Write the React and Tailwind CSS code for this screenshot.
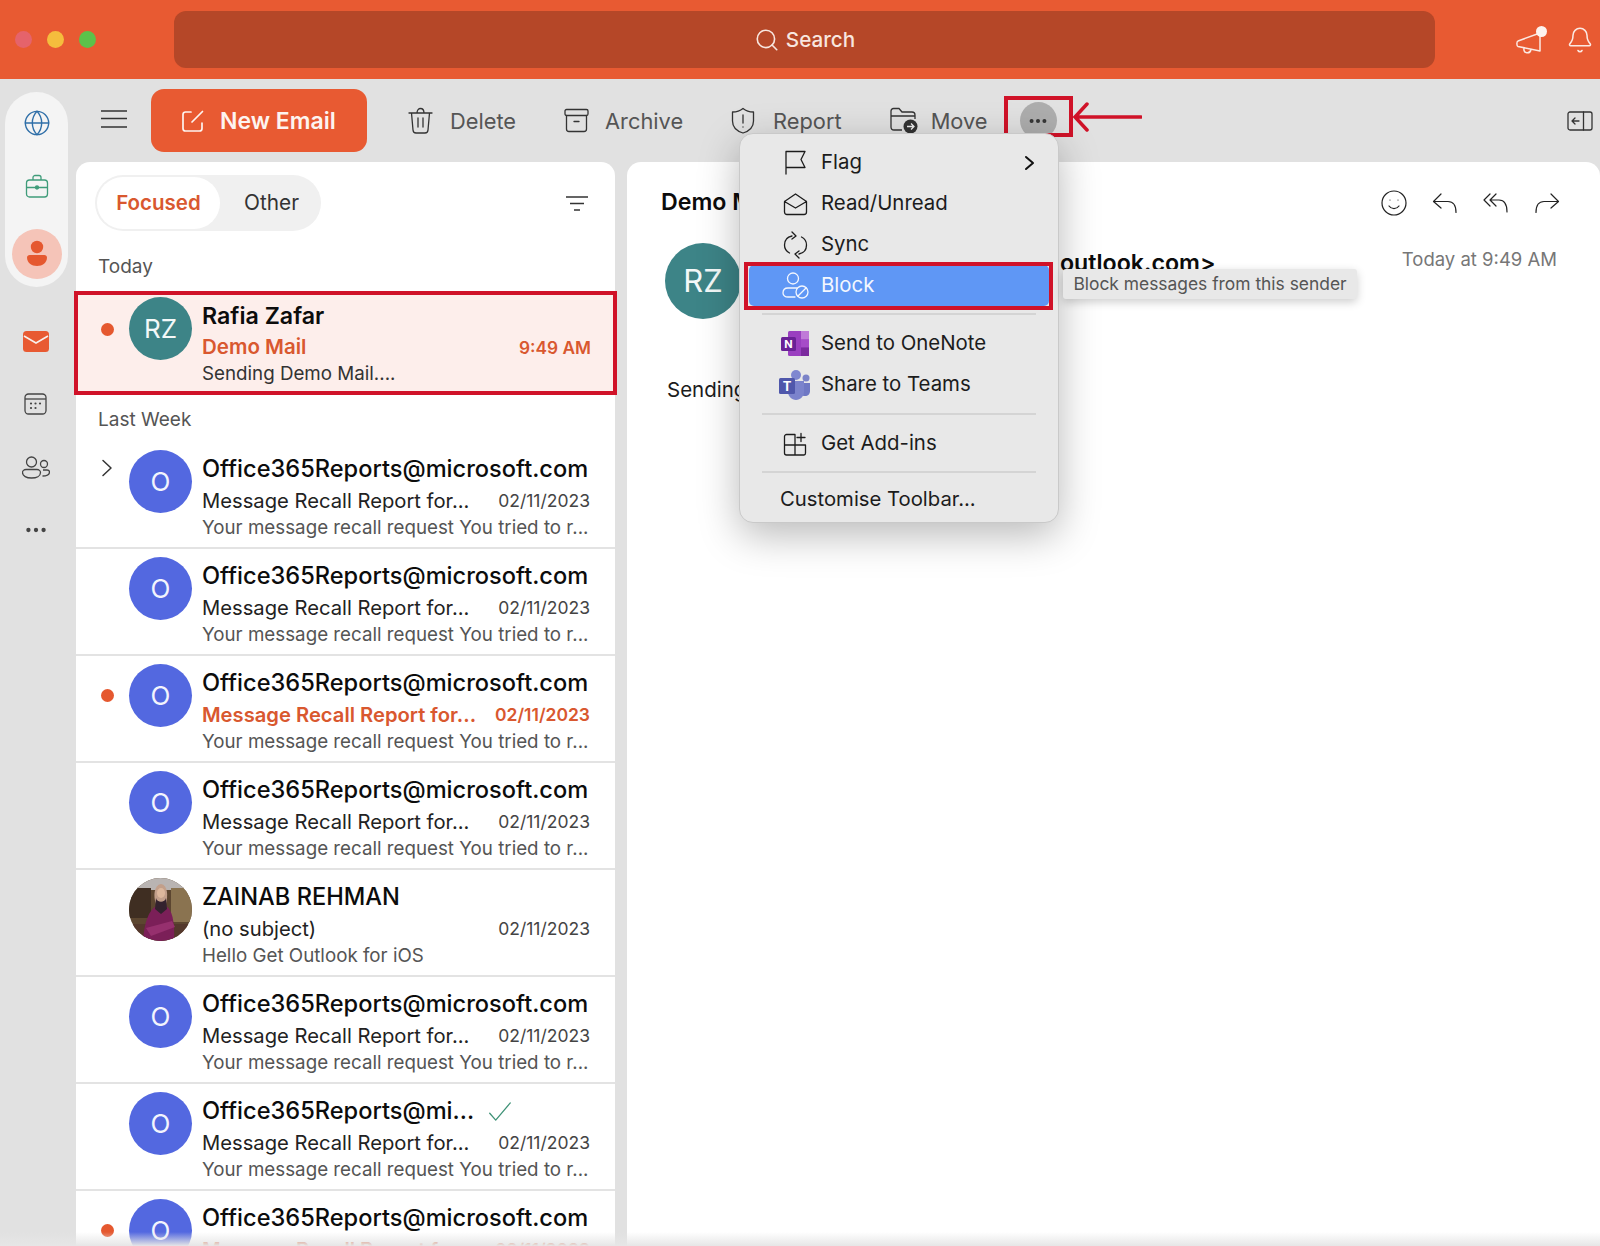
import { Search, Bell, Globe, Ellipsis } from "lucide-react";

const rows = [
  { subject: "Message Recall Report for...", chevron: true },
  { subject: "Message Recall Report for..." },
  { subject: "Message Recall Report for...", unread: true },
  { subject: "Message Recall Report for..." },
  { name: "ZAINAB REHMAN", subject: "(no subject)", preview: "Hello Get Outlook for iOS", photo: true },
  { subject: "Message Recall Report for..." },
  { name: "Office365Reports@mi...", subject: "Message Recall Report for...", check: true },
  { subject: "Message Recall Report for...", unread: true },
];

const Line = ({ className = "", ...p }) => (
  <svg fill="none" stroke="currentColor" strokeWidth="1.5" strokeLinecap="round" strokeLinejoin="round" className={className} {...p} />
);

const PersonRail = () => (
  <svg width="24" height="28" viewBox="0 0 24 28" fill="#e5582f">
    <circle cx="12" cy="7" r="6.2" />
    <path d="M2 17.5c0-1.6 1.2-2.5 2.7-2.5h14.6c1.5 0 2.7.9 2.7 2.5 0 5-4.5 8.5-10 8.5S2 22.500 2 17.500z" />
  </svg>
);

const ZainabPhoto = () => (
  <svg width="63" height="63" viewBox="0 0 63 63" className="shrink-0 rounded-full">
    <rect width="63" height="63" fill="#5c4630" />
    <rect width="63" height="12" fill="#b9b4b2" />
    <rect y="10" width="22" height="30" fill="#3f2e22" />
    <rect x="42" y="10" width="21" height="34" fill="#8a7350" />
    <rect y="46" width="63" height="17" fill="#54382c" />
    <path d="M14 63c1-18 6-31 13-35h10c6 4 9 15 8 35z" fill="#7b1f58" />
    <path d="M27 26c-3-8-2-19 5-20 7 1 7 12 5 20l-5 6z" fill="#c29f8a" />
    <path d="M27 20c1 5 9 5 10 0l1 11-6 5-6-5z" fill="#33222e" />
    <ellipse cx="32" cy="15" rx="4" ry="5" fill="#dcb79c" />
    <path d="M17 50l26-7 3 6-24 9z" fill="#96306e" />
  </svg>
);

const Toolbtn = ({ icon, label }) => (
  <div className="flex items-center text-[#555555]">
    {icon}
    <span className="mt-[2px] text-[21.800px]">{label}</span>
  </div>
);

const MenuItem = ({ icon, label, active, children }) => (
  <div className={`mx-[9px] flex h-[41px] items-center rounded-[5px] ${active ? "bg-[#5f97f5] text-[#f4f7fe]" : "text-[#1c1c1c]"}`}>
    <div className="flex w-[72px] justify-center pl-[20px]">{icon}</div>
    <span className="text-[20.400px]">{label}</span>
    {children}
  </div>
);

const Row = ({ row }) => (
  <div className="flex h-[107px] border-b-2 border-[#e3e3e3] pt-[8px]">
    <div className="flex w-[53px] shrink-0 justify-center pl-[9px] pt-[9px]">
      {row.chevron && (
        <Line width="12" height="18" viewBox="0 0 12 18" className="text-[#333333]"><path d="M2 1.500l8 7.500-8 7.500" /></Line>
      )}
      {row.unread && <div className="mt-[16px] h-[13px] w-[13px] rounded-full bg-[#e5582f]" />}
    </div>
    {row.photo ? (
      <ZainabPhoto />
    ) : (
      <div className="flex h-[63px] w-[63px] shrink-0 items-center justify-center rounded-full bg-[#5368e0] text-[26px] text-[#f2f4fd]">O</div>
    )}
    <div className="ml-[10px] min-w-0 flex-1 pr-[25px] pt-[3px]">
      <div className="flex h-[32px] items-center text-[23.600px] font-medium leading-[32px] text-[#0c0c0c]">
        <span className="whitespace-nowrap">{row.name || "Office365Reports@microsoft.com"}</span>
        {row.check && (
          <Line width="24" height="21" viewBox="0 0 28 24" strokeWidth="1.500" className="ml-[14px] text-[#3f9277]"><path d="M2 14l7 8L26 2" /></Line>
        )}
      </div>
      <div className={`flex h-[31px] items-center justify-between leading-[31px] ${row.unread ? "font-semibold text-[#d9582f]" : "text-[#222222]"}`}>
        <span className="whitespace-nowrap text-[20.200px]">{row.subject}</span>
        <span className={`text-[17.500px] ${row.unread ? "" : "text-[#444444]"}`}>02/11/2023</span>
      </div>
      <div className="mt-[1px] h-[22px] truncate text-[18.750px] leading-[22px] text-[#555555]">
        {row.preview || "Your message recall request You tried to r..."}
      </div>
    </div>
  </div>
);

export default function App() {
  return (
    <div className="relative flex h-[1246px] w-[1600px] flex-col overflow-hidden bg-[#e1e1e1] [font-family:Inter,sans-serif]">
      {/* title bar */}
      <div className="flex h-[79px] shrink-0 items-center bg-[#e85a32]">
        <div className="flex w-[174px] shrink-0 items-center gap-[15px] pl-[15px]">
          <div className="h-[17px] w-[17px] rounded-full bg-[#e5636b]" />
          <div className="h-[17px] w-[17px] rounded-full bg-[#f5bd3d]" />
          <div className="h-[17px] w-[17px] rounded-full bg-[#5cc24a]" />
        </div>
        <div className="flex h-[57px] w-[1261px] items-center justify-center gap-[6px] rounded-[12px] bg-[#b54728] text-[#f8e6df]">
          <Search size={26} strokeWidth={1.500} />
          <span className="text-[20.700px] font-medium">Search</span>
        </div>
        <div className="ml-auto flex items-center gap-[20px] pr-[6px] text-[#fbe9e3]">
          <div className="relative h-[32px] w-[30px]">
            <Line width="28" height="28" viewBox="0 0 28 28" strokeWidth="1.500" className="absolute left-0 top-[4px]">
              <path d="M2 13l22-8v18L2 18.500c-1.500-.5-1.500-5 0-5.500z" />
              <path d="M8 20.500c-1 5 6 6 7 1" />
            </Line>
            <div className="absolute right-[-1px] top-[2px] h-[11px] w-[11px] rounded-full bg-[#fdf3ef]" />
          </div>
          <Bell size={28} strokeWidth={1.300} />
        </div>
      </div>

      <div className="flex min-h-0 flex-1">
        {/* left rail */}
        <div className="flex w-[76px] shrink-0 flex-col items-center">
          <div className="ml-[-3px] mt-[13px] flex h-[195px] w-[63px] flex-col items-center rounded-full bg-[#f4f4f4]">
            <Globe size={28} strokeWidth={1.200} className="mt-[17px] text-[#2f6fa8]" />
            <svg width="24" height="25" viewBox="0 0 24 25" fill="none" stroke="#3f9c7a" strokeWidth="1.300" strokeLinejoin="round" className="mt-[37px]">
              <rect x="1.500" y="6" width="21" height="17" rx="3" />
              <path d="M8 6V3.500C8 2.500 9 1.500 10 1.500h4c1 0 2 1 2 2V6M1.500 13.500h21" />
              <circle cx="12" cy="13.500" r="1.500" fill="#3f9c7a" />
            </svg>
            <div className="mt-[30px] flex h-[50px] w-[50px] items-center justify-center rounded-full bg-[#f5c4b8]">
              <PersonRail />
            </div>
          </div>
          <svg width="26" height="21" viewBox="0 0 26 21" className="ml-[-5px] mt-[44px]">
            <rect width="26" height="21" rx="3.500" fill="#e85a32" />
            <path d="M1 5l12 7 12-7" fill="none" stroke="#f8f0ec" strokeWidth="1.600" />
          </svg>
          <svg width="23" height="22" viewBox="0 0 23 22" fill="none" stroke="#444444" strokeWidth="1.300" className="ml-[-5px] mt-[41px]">
            <rect x="1" y="1" width="21" height="20" rx="3.500" />
            <path d="M1 6h21" />
            <path d="M7 10.500h.01M11.500 10.500h.01M16 10.500h.01M7 15h.01M11.500 15h.01" strokeWidth="2.200" strokeLinecap="round" />
          </svg>
          <svg width="28" height="23" viewBox="0 0 28 23" fill="none" stroke="#444444" strokeWidth="1.300" className="ml-[-5px] mt-[41px]">
            <circle cx="9.500" cy="6" r="5" />
            <path d="M4 13.500h11c2 0 3.500 1.500 3.500 3 0 3.500-4 5.500-9 5.500s-9-2-9-5.500c0-1.500 1.500-3 3.500-3z" />
            <circle cx="22" cy="8" r="3.500" />
            <path d="M21 14h4c1.500 0 2.500 1 2.500 2 0 2.500-3 4-7 4" />
          </svg>
          <Ellipsis size={26} strokeWidth={2} className="ml-[-5px] mt-[38px] text-[#444444]" />
        </div>

        <div className="flex min-w-0 flex-1 flex-col">
          {/* toolbar */}
          <div className="flex h-[83px] shrink-0 items-center">
            <svg width="26" height="18" viewBox="0 0 26 18" fill="none" stroke="#333333" strokeWidth="1.300" className="ml-[25px] mb-[3px]">
              <path d="M0 1h26M0 8.500h26M0 17h26" />
            </svg>
            <div className="ml-[24px] flex h-[63px] w-[216px] items-center rounded-[13px] bg-[#e85a32] pl-[30px] text-[#fdf4f0]">
              <Line width="24" height="24" viewBox="0 0 24 24" strokeWidth="1.700" className="mr-[15px]">
                <path d="M10 3H4.500C3 3 2 4 2 5.500v14C2 21 3 22 4.500 22h14c1.500 0 2.500-1 2.500-2.500V14" />
                <path d="M21.500 2.500L11 13" />
              </Line>
              <span className="mt-[2px] text-[23px] font-semibold">New Email</span>
            </div>
            <div className="ml-[41px] flex items-center gap-[48px]">
              <Toolbtn
                label="Delete"
                icon={
                  <Line width="25" height="27" viewBox="0 0 25 27" strokeWidth="1.300" className="mr-[17px] text-[#333333]">
                    <path d="M1 6h23M3.500 6l1.500 17c.1 1.800 1.300 3 3 3h9c1.700 0 2.900-1.200 3-3l1.500-17M9 6c0-6 7-6 7 0M10 11v9M15 11v9" />
                  </Line>
                }
              />
              <Toolbtn
                label="Archive"
                icon={
                  <Line width="25" height="25" viewBox="0 0 25 25" strokeWidth="1.300" className="mr-[16px] text-[#333333]">
                    <rect x="1" y="1.500" width="23" height="6" rx="1.500" />
                    <path d="M2.500 7.500V21c0 1.500 1 2.500 2.500 2.500h15c1.500 0 2.500-1 2.500-2.500V7.500M10 13.500h5" />
                  </Line>
                }
              />
              <Toolbtn
                label="Report"
                icon={
                  <Line width="24" height="27" viewBox="0 0 24 27" strokeWidth="1.300" className="mr-[18px] text-[#333333]">
                    <path d="M12 1.500c3 2.500 6.500 3.500 10.500 3.500v9c0 6-4 10-10.500 12C5.500 24 1.500 20 1.500 14V5C5.500 5 9 4 12 1.500zM12 8v8M12 20h.01" />
                  </Line>
                }
              />
              <Toolbtn
                label="Move"
                icon={
                  <svg width="28" height="27" viewBox="0 0 28 27" className="mr-[13px] text-[#333333]">
                    <path d="M12 23H4c-2 0-3-1-3-3V4c0-1.500 1-2.500 2.500-2.500H9l3 3.500h10c2 0 3 1 3 3v4M1 9h24" fill="none" stroke="currentColor" strokeWidth="1.300" />
                    <circle cx="20.500" cy="19.500" r="7" fill="#333333" />
                    <path d="M17 19.500h7M21 16.500l3 3-3 3" fill="none" stroke="#f0f0f0" strokeWidth="1.300" />
                  </svg>
                }
              />
            </div>
            <div className="ml-[32px] flex h-[37px] w-[37px] items-center justify-center rounded-full bg-[#adadad]">
              <Ellipsis size={22} strokeWidth={2.400} className="text-[#333333]" />
            </div>
            <svg width="26" height="20" viewBox="0 0 26 20" fill="none" stroke="#333333" strokeWidth="1.300" strokeLinecap="round" strokeLinejoin="round" className="ml-auto mr-[7px]">
              <rect x="1" y="1" width="24" height="18" rx="2" />
              <path d="M16.500 1v18M12 10H5M8 7l-3 3 3 3" />
            </svg>
          </div>

          {/* panes */}
          <div className="flex min-h-0 flex-1 gap-[12px]">
            <div className="w-[539px] shrink-0 rounded-t-[14px] bg-white">
              <div className="flex items-center justify-between pl-[19px] pr-[27px] pt-[13px]">
                <div className="flex h-[56px] w-[226px] items-center rounded-full bg-[#f0f0f0] pl-[2px]">
                  <div className="flex h-[52px] w-[123px] items-center justify-center rounded-full bg-white text-[20.500px] font-semibold text-[#d9582f]">Focused</div>
                  <div className="ml-[24px] text-[20.800px] text-[#333333]">Other</div>
                </div>
                <svg width="22" height="15" viewBox="0 0 22 15" fill="none" stroke="#333333" strokeWidth="1.300">
                  <path d="M0 1h22M4 7.500h14M8 14h6" />
                </svg>
              </div>
              <div className="ml-[22px] mt-[23px] text-[19px] leading-[26px] text-[#555555]">Today</div>

              {/* selected mail */}
              <div className="relative mx-[-2px] mt-[11px] flex h-[104px] border-[4px] border-[#d01228] bg-[#fdeeeb] pt-[2px]">
                <div className="flex w-[51px] shrink-0 justify-center pl-[7px] pt-[26px]">
                  <div className="h-[13px] w-[13px] rounded-full bg-[#e5582f]" />
                </div>
                <div className="flex h-[63px] w-[63px] shrink-0 items-center justify-center rounded-full bg-[#3d8487] text-[26px] text-[#f3f8f8]">RZ</div>
                <div className="ml-[10px] min-w-0 flex-1 pr-[22px] pt-[3px]">
                  <div className="h-[32px] text-[23.200px] font-semibold leading-[32px] text-[#0c0c0c]">Rafia Zafar</div>
                  <div className="flex h-[31px] items-center justify-between font-semibold text-[#d9582f]">
                    <span className="text-[20.500px]">Demo Mail</span>
                    <span className="text-[17.300px]">9:49 AM</span>
                  </div>
                  <div className="h-[22px] text-[18.750px] leading-[22px] text-[#333333]">Sending Demo Mail....</div>
                </div>
              </div>

              <div className="ml-[22px] mb-[9px] mt-[12px] text-[19px] leading-[26px] text-[#555555]">Last Week</div>
              {rows.map((row, i) => (
                <Row key={i} row={row} />
              ))}
            </div>

            {/* reading pane */}
            <div className="min-w-0 flex-1 rounded-t-[14px] bg-white">
              <div className="flex h-[81px] items-center justify-between pl-[34px] pr-[40px]">
                <span className="text-[23.200px] font-semibold text-[#0c0c0c]">Demo Mail</span>
                <div className="flex items-center gap-[25px] text-[#222222]">
                  <Line width="26" height="26" viewBox="0 0 26 26" strokeWidth="1.200">
                    <circle cx="13" cy="13" r="12" />
                    <path d="M8 16c2.500 3.500 7.500 3.500 10 0M9 10h.01M17 10h.01" />
                  </Line>
                  <Line width="26" height="22" viewBox="0 0 26 22" strokeWidth="1.200">
                    <path d="M9 2L1.500 9.500 9 16M1.500 9.500H16c5 0 8 3.500 8 11" />
                  </Line>
                  <Line width="26" height="22" viewBox="0 0 26 22" strokeWidth="1.200">
                    <path d="M7 2L1 8l6 6M13 2L7 8l6 6M7 8h9c5 0 8 4 8 12" />
                  </Line>
                  <Line width="26" height="22" viewBox="0 0 26 22" strokeWidth="1.200">
                    <path d="M17 2l7.500 7.500L17 16M24.500 9.500H10c-5 0-8 3.500-8 11" />
                  </Line>
                </div>
              </div>
              <div className="flex pl-[38px] pr-[43px]">
                <div className="flex h-[76px] w-[76px] shrink-0 items-center justify-center rounded-full bg-[#3d8487] text-[31px] text-[#f3f8f8]">RZ</div>
                <div className="ml-[319px] mt-[5px] text-[23.200px] font-semibold leading-[30px] text-[#0c0c0c]">outlook.com&gt;</div>
                <div className="ml-auto mt-[3px] text-[18.500px] text-[#777777]">Today at 9:49 AM</div>
              </div>
              <div className="ml-[40px] mt-[56px] text-[20.500px] leading-[30px] text-[#1c1c1c]">Sending Demo Mail....</div>
            </div>
          </div>
        </div>
      </div>

      {/* annotation over the toolbar */}
      <div className="absolute left-[1004px] top-[96px] h-[41px] w-[69px] border-[4px] border-[#d01228]" />
      <svg width="70" height="32" viewBox="0 0 70 32" fill="none" stroke="#d01228" strokeWidth="3.500" strokeLinecap="round" className="absolute left-[1072px] top-[101px]">
        <path d="M3 16h66M15 3L3 16l12 13" />
      </svg>

      {/* more menu */}
      <div className="absolute left-[739px] top-[133px] h-[390px] w-[320px] rounded-[14px] border border-[#c9c9c9] bg-[#e8e8e8] pt-[8px] shadow-[0_12px_40px_rgba(0,0,0,0.28)]">
        <MenuItem
          label="Flag"
          icon={
            <Line width="23" height="25" viewBox="0 0 23 25" strokeWidth="1.300">
              <path d="M2 24V1.500h19l-4 8 4 8H2" />
            </Line>
          }
        >
          <Line width="11" height="16" viewBox="0 0 11 16" strokeWidth="2" className="ml-auto mr-[14px] text-[#111111]">
            <path d="M2 2l7 6-7 6" />
          </Line>
        </MenuItem>
        <MenuItem
          label="Read/Unread"
          icon={
            <Line width="25" height="24" viewBox="0 0 25 24" strokeWidth="1.300">
              <path d="M1.500 9.500L12.500 2l11 7.500V20c0 1.500-1 2.500-2.500 2.500H4c-1.500 0-2.500-1-2.500-2.500zM1.500 9.500l11 6.500 11-6.500" />
            </Line>
          }
        />
        <MenuItem
          label="Sync"
          icon={
            <Line width="25" height="30" viewBox="0 0 25 30" strokeWidth="1.300">
              <path d="M9 6C4 7 1.500 10.500 1.500 15c0 3.500 2 6.500 5 8M16 24c5-1 7.500-4.500 7.500-9 0-3.500-2-6.500-5-8M9 2l4 4-4 3M16 28l-4-4 4-3" />
            </Line>
          }
        />
        <MenuItem
          active
          label="Block"
          icon={
            <Line width="27" height="27" viewBox="0 0 27 27" strokeWidth="1.300">
              <circle cx="11" cy="6.500" r="5.500" />
              <path d="M13 25H6c-2.800 0-5-1.500-5-4 0-3 2-5 5-5h9" />
              <circle cx="20" cy="20" r="6" />
              <path d="M16 24l8-8" />
            </Line>
          }
        />
        <div className="mx-[22px] mb-[8px] mt-[7px] h-[2px] bg-[#d4d4d4]" />
        <MenuItem
          label="Send to OneNote"
          icon={
            <svg width="28" height="25" viewBox="0 0 28 25">
              <rect x="7" y="0" width="21" height="25" rx="1.500" fill="#9a3fc0" />
              <rect x="20" y="0" width="8" height="8.500" fill="#c07ad8" />
              <rect x="20" y="8.500" width="8" height="8" fill="#a64cc8" />
              <rect x="20" y="16.500" width="8" height="8.500" fill="#7b2a9e" />
              <rect x="0" y="6" width="15" height="14" rx="1.500" fill="#6a2196" />
              <text x="7.500" y="17" textAnchor="middle" fontSize="11" fontWeight="700" fill="#ffffff">N</text>
            </svg>
          }
        />
        <MenuItem
          label="Share to Teams"
          icon={
            <svg width="32" height="30" viewBox="0 0 32 30">
              <circle cx="27" cy="8" r="3.500" fill="#7b83c8" />
              <path d="M21 13h10v8c0 3-2 5-5 5-3 0-5-2-5-5z" fill="#6f78c4" />
              <circle cx="17" cy="5" r="5" fill="#7f87d0" />
              <path d="M9 11h16v11c0 4-3.500 8-8 8s-8-4-8-8z" fill="#7b83cc" />
              <rect x="0" y="8" width="16" height="16" rx="1.500" fill="#4f57ab" />
              <text x="8" y="20.500" textAnchor="middle" fontSize="13" fontWeight="700" fill="#ffffff">T</text>
            </svg>
          }
        />
        <div className="mx-[22px] my-[8px] h-[2px] bg-[#d4d4d4]" />
        <MenuItem
          label="Get Add-ins"
          icon={
            <Line width="24" height="24" viewBox="0 0 24 24" strokeWidth="1.300">
              <path d="M12 2.500H3.500C2.500 2.500 1.500 3.500 1.500 4.500V21c0 1 1 2 2 2H21c1 0 1.500-1 1.500-2V13H1.500M12 2.500V23M18 1.500v8M14 5.500h8" />
            </Line>
          }
        />
        <div className="mx-[22px] mb-[5px] mt-[7px] h-[2px] bg-[#d4d4d4]" />
        <div className="pl-[40px] text-[20.300px] leading-[41px] text-[#1c1c1c]">Customise Toolbar...</div>
      </div>
      <div className="absolute left-[744px] top-[262px] h-[48px] w-[309px] border-[4px] border-[#d01228]" />

      {/* tooltip */}
      <div className="absolute left-[1063px] top-[269px] flex h-[30px] w-[294px] items-center justify-center rounded-[3px] bg-[#e8e8e8] text-[17.400px] text-[#555555] shadow-[0_3px_10px_rgba(0,0,0,0.2)]">
        Block messages from this sender
      </div>

      {/* bottom fade */}
      <div className="absolute inset-x-0 bottom-0 h-[14px] bg-gradient-to-b from-transparent to-[#e6e6e6]" />
    </div>
  );
}
